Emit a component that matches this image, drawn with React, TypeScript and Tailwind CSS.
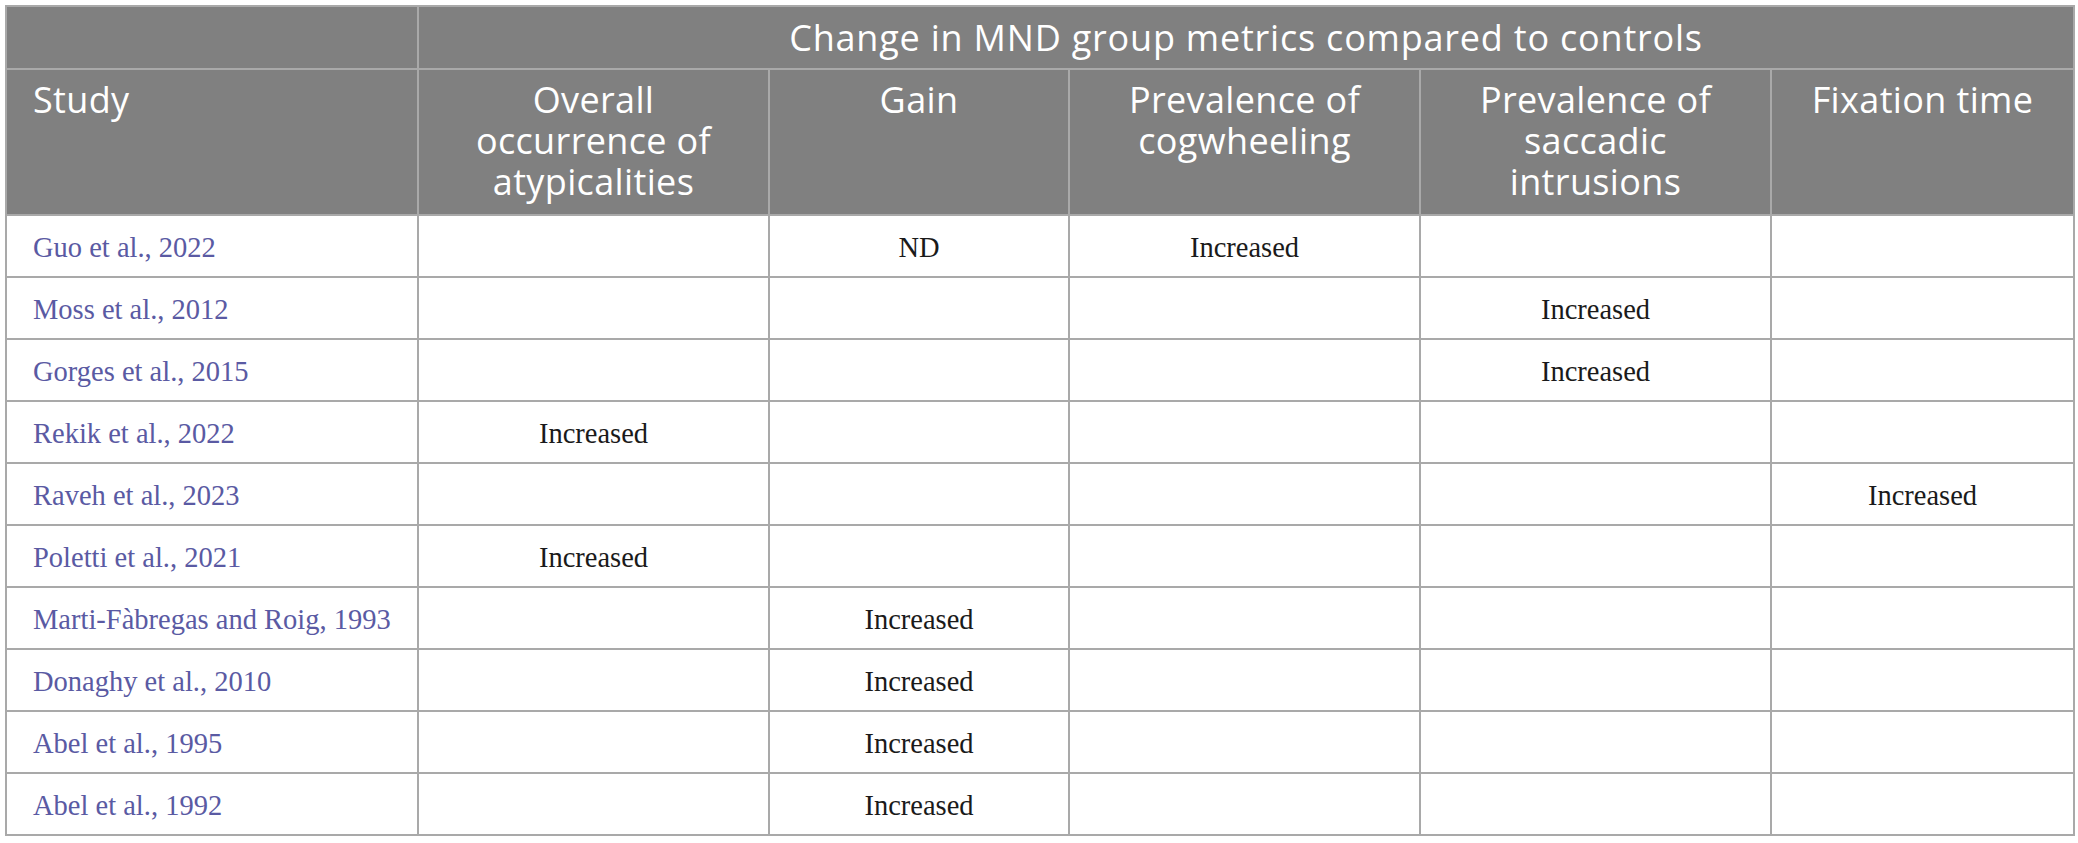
import React from 'react'

type Row = {
  study: string
  values: [string, string, string, string, string]
}

const rows: Row[] = [
  { study: 'Guo et al., 2022', values: ['', 'ND', 'Increased', '', ''] },
  { study: 'Moss et al., 2012', values: ['', '', '', 'Increased', ''] },
  { study: 'Gorges et al., 2015', values: ['', '', '', 'Increased', ''] },
  { study: 'Rekik et al., 2022', values: ['Increased', '', '', '', ''] },
  { study: 'Raveh et al., 2023', values: ['', '', '', '', 'Increased'] },
  { study: 'Poletti et al., 2021', values: ['Increased', '', '', '', ''] },
  { study: 'Marti-Fàbregas and Roig, 1993', values: ['', 'Increased', '', '', ''] },
  { study: 'Donaghy et al., 2010', values: ['', 'Increased', '', '', ''] },
  { study: 'Abel et al., 1995', values: ['', 'Increased', '', '', ''] },
  { study: 'Abel et al., 1992', values: ['', 'Increased', '', '', ''] },
]

const metrics = [
  'Overall occurrence of atypicalities',
  'Gain',
  'Prevalence of cogwheeling',
  'Prevalence of saccadic intrusions',
  'Fixation time',
]

const headFont = { fontFamily: '"Open Sans", "Noto Sans", sans-serif' }
const bodyFont = { fontFamily: '"Liberation Serif", "DejaVu Serif", serif' }

export default function App() {
  return (
    <div className="min-h-screen bg-white px-[5px] pt-[5px]">
      <table className="w-[2068px] table-fixed border-collapse border-2 border-[#a9a9a9]">
        <colgroup>
          <col className="w-[412px]" />
          <col className="w-[351px]" />
          <col className="w-[300px]" />
          <col className="w-[351px]" />
          <col className="w-[351px]" />
          <col className="w-[303px]" />
        </colgroup>
        <thead className="bg-[#808080] text-white" style={headFont}>
          <tr className="h-[63px]">
            <th className="border-2 border-[#a9a9a9]" />
            <th
              colSpan={5}
              className="border-2 border-[#a9a9a9] text-center align-middle text-[36px] font-normal leading-[41px] tracking-[0.022em]"
            >
              Change in MND group metrics compared to controls
            </th>
          </tr>
          <tr className="h-[146px]">
            <th className="border-2 border-[#a9a9a9] pl-[26px] pt-[9px] text-left align-top text-[36px] font-normal leading-[41px] tracking-[0.01em]">
              Study
            </th>
            {metrics.map((m) => (
              <th
                key={m}
                className="border-2 border-[#a9a9a9] px-[30px] pt-[9px] text-center align-top text-[36px] font-normal leading-[41px] tracking-[0.01em]"
              >
                {m}
              </th>
            ))}
          </tr>
        </thead>
        <tbody style={bodyFont}>
          {rows.map((r) => (
            <tr key={r.study} className="h-[62px]">
              <td className="border-2 border-[#a9a9a9] pl-[26px] pt-[4px] align-middle text-[28.5px] leading-none text-[#5a5aa3]">
                {r.study}
              </td>
              {r.values.map((v, i) => (
                <td
                  key={i}
                  className="border-2 border-[#a9a9a9] pt-[4px] text-center align-middle text-[28.5px] leading-none text-[#1a1a1a]"
                >
                  {v}
                </td>
              ))}
            </tr>
          ))}
        </tbody>
      </table>
    </div>
  )
}
